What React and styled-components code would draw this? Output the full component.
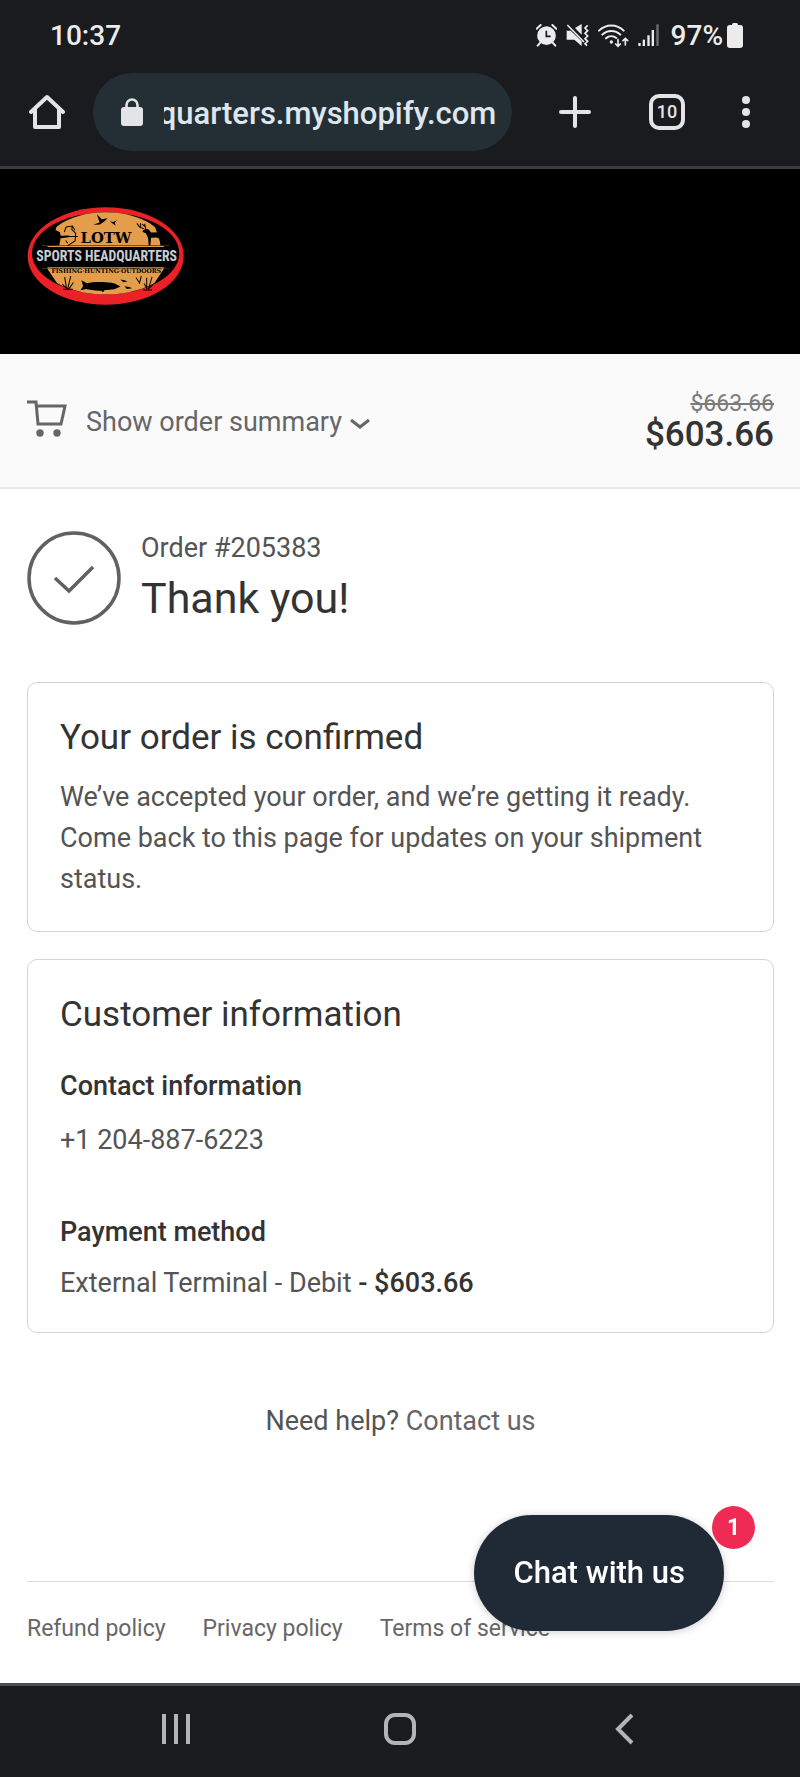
import { useEffect, useRef } from "react";
import styled, { createGlobalStyle } from "styled-components";

const GlobalStyle = createGlobalStyle`
  * {
    box-sizing: border-box;
  }
  body {
    margin: 0;
    background-color: #fff;
    font-family: Roboto, "Liberation Sans", sans-serif;
    font-size: 27px;
    line-height: 41px;
    color: #545454;
  }
  h1, h2, h3, p {
    margin: 0;
  }
  a {
    color: #666668;
    text-decoration: none;
  }
  button {
    padding: 0;
    border: 0;
    background: none;
    font: inherit;
    cursor: pointer;
  }
  svg {
    display: block;
    flex-shrink: 0;
  }
`;

const Screen = styled.div`
  display: flex;
  flex-direction: column;
  min-height: 100vh;
`;

/* phone + browser bars */
const Chrome = styled.div`
  background-color: #191b1e;
  border-bottom: 3px solid #3b3c3e;
  color: #ececec;
`;

const StatusBar = styled.div`
  display: flex;
  align-items: center;
  justify-content: space-between;
  height: 73px;
  padding: 0 57px 2px 50px;
  font-size: 28px;
  font-weight: 500;
`;

const StatusIcons = styled.div`
  display: flex;
  align-items: center;
  gap: 9px;
`;

const Battery = styled.div`
  display: flex;
  align-items: center;
  gap: 4px;
  padding-left: 3px;
`;

const Toolbar = styled.div`
  display: flex;
  align-items: center;
  gap: 28px;
  padding: 0 49px 15px 29px;
  color: #e2e4e8;
`;

const AddressBar = styled.label`
  display: flex;
  flex: 1;
  align-items: center;
  gap: 21px;
  min-width: 0;
  height: 78px;
  padding: 0 16px 0 28px;
  border-radius: 39px;
  background-color: #232f35;
`;

const Url = styled.input`
  flex: 1;
  min-width: 0;
  padding: 2px 0 0;
  border: 0;
  outline: 0;
  background: none;
  color: #dfe6ee;
  font-family: inherit;
  font-size: 31px;
  font-weight: 500;
`;

const ToolbarActions = styled.div`
  display: flex;
  align-items: center;
  gap: 56px;
  padding-left: 17px;
`;

const TabCount = styled.button`
  width: 36px;
  height: 36px;
  border: 4px solid #e2e4e8;
  border-radius: 10px;
  color: #e2e4e8;
  font-size: 18px;
  font-weight: 500;
  line-height: 28px;
`;

const IconButton = styled.button`
  color: inherit;
`;

/* shop */
const ShopHeader = styled.header`
  padding: 38px 27px 49px;
  background-color: #000;
`;

const SummaryBar = styled.div`
  display: flex;
  align-items: center;
  justify-content: space-between;
  padding: 38px 26px 34px 27px;
  border-bottom: 2px solid #e8e8e8;
  background-color: #fafafa;
`;

const SummaryToggle = styled.button`
  display: flex;
  align-items: center;
  color: #666668;
`;

const SummaryLabel = styled.span`
  padding: 0 8px 0 19px;
`;

const Prices = styled.div`
  display: flex;
  flex-direction: column;
  text-align: right;
`;

const OldPrice = styled.del`
  color: #7c7c7c;
  font-size: 23px;
  line-height: 24px;
`;

const Price = styled.strong`
  color: #333;
  font-size: 35px;
  font-weight: 500;
  line-height: 37px;
`;

const Main = styled.main`
  flex: 1;
  padding: 39px 26px 60px 27px;
`;

const OrderHeader = styled.div`
  display: flex;
  align-items: center;
  gap: 20px;
  margin-bottom: 55px;
`;

const Title = styled.h1`
  color: #333;
  font-size: 43px;
  font-weight: 400;
  line-height: 58px;
`;

const Card = styled.section`
  margin-bottom: 27px;
  padding: 32px 32px ${(props) => props.$bottom};
  border: 1px solid #d4d4d4;
  border-radius: 10px;
`;

const CardTitle = styled.h2`
  margin-bottom: ${(props) => props.$space};
  color: #333;
  font-size: 35px;
  font-weight: 400;
  line-height: 46px;
`;

const Label = styled.h3`
  margin-bottom: ${(props) => props.$space};
  color: #333;
  font-size: 27px;
  font-weight: 500;
`;

const Phone = styled.p`
  margin-bottom: 51px;
`;

const Amount = styled.strong`
  color: #333;
  font-weight: 500;
`;

const Help = styled.p`
  padding-top: 41px;
  text-align: center;
`;

const Footer = styled.footer`
  margin: 0 26px 0 27px;
  padding: 30px 0 37px;
  border-top: 1px solid #dcdcdc;
`;

const PolicyLinks = styled.nav`
  display: flex;
  gap: 37px;
  font-size: 23px;
  line-height: 34px;
`;

const NavBar = styled.nav`
  display: flex;
  align-items: center;
  justify-content: space-between;
  height: 94px;
  padding: 0 160px 5px;
  border-top: 3px solid #4a4b4d;
  background-color: #191b1f;
  color: #b4b4b6;
`;

const NavButton = styled.button`
  display: flex;
  justify-content: center;
  width: 32px;
  color: inherit;
`;

/* floats over the page */
const ChatButton = styled.button`
  position: fixed;
  right: 76px;
  bottom: 146px;
  height: 116px;
  padding: 0 39px 2px;
  border-radius: 58px;
  background-color: #202a36;
  box-shadow: 0 1px 8px rgba(0, 0, 0, 0.2);
  color: #fff;
  font-size: 31px;
  font-weight: 500;
`;

const ChatBadge = styled.span`
  position: absolute;
  top: -9px;
  right: -31px;
  width: 43px;
  height: 43px;
  border-radius: 50%;
  background-color: #ef2b55;
  font-size: 23px;
  font-weight: 700;
  line-height: 43px;
`;

const AlarmIcon = () => (
  <svg width="21" height="23" viewBox="405 72 63 69" fill="none" stroke="currentColor">
    <circle cx="436.500" cy="107" r="28" fill="currentColor" stroke="none" />
    <path d="M407 86l12-11M466 86l-12-11M417 129l-7 8M456 129l7 8" strokeWidth="6" strokeLinecap="round" />
    <path d="M436 92v17h13" stroke="#191b1e" strokeWidth="5" />
  </svg>
);

const MuteIcon = () => (
  <svg width="23" height="23" viewBox="503 72 69 69" fill="currentColor">
    <path d="M505 92h12l33 32v14l-22-19h-23zM530 84l20-12v32z" />
    <path d="M507 75l50 51" stroke="currentColor" strokeWidth="5" />
    <path d="M568 76l-8 8 8 8-8 8 8 8-8 8 8 8-8 7 6 6" fill="none" stroke="currentColor" strokeWidth="5" />
  </svg>
);

const WifiIcon = () => (
  <svg width="31" height="24" viewBox="600 70 93 72" fill="none" stroke="currentColor" strokeWidth="6" strokeLinecap="round">
    <path d="M603 90c21-21 53-21 74 0M613 102c15-15 39-15 54 0M624 113c9-8 22-8 31-1" />
    <circle cx="640" cy="124" r="5" fill="currentColor" stroke="none" />
    <path d="M660 117v19M653 130l7 7 7-7M682 133v-19M675 120l7-7 7 7" strokeWidth="5" />
  </svg>
);

const SignalIcon = () => (
  <svg width="21" height="23" viewBox="713 72 63 69" fill="currentColor">
    <rect x="714" y="129" width="7" height="9" />
    <rect x="727" y="119" width="7" height="19" />
    <rect x="741" y="106" width="7" height="32" />
    <rect x="754" y="90" width="7" height="48" />
    <rect x="768" y="73" width="7" height="65" opacity="0.4" />
  </svg>
);

const BatteryIcon = () => (
  <svg width="16" height="25" viewBox="0 0 16 25" fill="currentColor">
    <path d="M5 2V1.500Q5 0 6.500 0h3Q11 0 11 1.500V2h2.500Q16 2 16 5v17q0 3-3 3H3q-3 0-3-3V5q0-3 2.500-3z" />
  </svg>
);

const HomeIcon = () => (
  <svg width="36" height="36" viewBox="0 0 36 36" fill="none" stroke="currentColor" strokeWidth="4">
    <path d="M2 18L18 3l16 15" strokeLinecap="round" strokeLinejoin="round" />
    <path d="M6 15v18h24V15" strokeLinejoin="round" />
  </svg>
);

const LockIcon = () => (
  <svg width="22" height="28" viewBox="0 0 22 28">
    <path d="M5.500 11V7a5.500 5.500 0 0 1 11 0v4" fill="none" stroke="currentColor" strokeWidth="2.600" />
    <rect y="9" width="22" height="19" rx="3" fill="currentColor" />
  </svg>
);

const PlusIcon = () => (
  <svg width="36" height="36" viewBox="0 0 36 36" stroke="currentColor" strokeWidth="4" strokeLinecap="round">
    <path d="M18 4v28M4 18h28" />
  </svg>
);

const DotsIcon = () => (
  <svg width="10" height="36" viewBox="0 0 10 36" fill="currentColor">
    <circle cx="5" cy="6" r="4" />
    <circle cx="5" cy="18" r="4" />
    <circle cx="5" cy="30" r="4" />
  </svg>
);

const CartIcon = () => (
  <svg width="40" height="46" viewBox="0 0 40 46" fill="none" stroke="currentColor" strokeWidth="3">
    <path d="M0 2h9l2 22h23l4-18H10" />
    <circle cx="13" cy="33" r="3.700" fill="currentColor" stroke="none" />
    <circle cx="30" cy="33" r="3.700" fill="currentColor" stroke="none" />
  </svg>
);

const ChevronIcon = () => (
  <svg width="20" height="12" viewBox="0 0 20 12" fill="none" stroke="currentColor" strokeWidth="3">
    <path d="M1 3l9 7 9-7" />
  </svg>
);

const CheckIcon = () => (
  <svg width="94" height="94" viewBox="0 0 94 94" fill="none" stroke="#5f6164">
    <circle cx="47" cy="47" r="45" strokeWidth="3.500" />
    <path d="M28 47l14 13 24-24" strokeWidth="3.500" />
  </svg>
);

const Logo = () => (
  <svg width="157" height="98" viewBox="36 38 467 290" role="img" aria-label="LOTW Sports Headquarters">
    <ellipse cx="270" cy="183" rx="232" ry="145" fill="#ec2127" />
    <ellipse cx="270" cy="175" rx="219" ry="122" fill="#000" />
    <path d="M80 152C104 92 178 53 270 53s166 39 190 99zM80 220h380c-24 44-98 77-190 77S104 264 80 220z" fill="#e39d4b" />
    <path d="M97 155h346M97 218h346" stroke="#e39d4b" strokeWidth="3" />
    {/* dark corners inside the ring */}
    <path d="M80 152c7-22 22-42 44-58l-15 58zM460 152c-7-22-22-42-44-58l20 58zM80 220c8 18 24 34 48 48l-32-48zM460 220c-8 18-24 34-48 48l32-48z" />
    {/* geese */}
    <path d="M233 90l19-7-8-24 14 15 18-3-12 11-11 7zM282 80l10 2 12-5-7 7 3 9-9-7z" />
    {/* archer */}
    <path d="M101 152l9-22 2-15 9-9 13 6 2 11 24-1v5l-24 3-4 22z" />
    <path d="M152 97l19-3-2 10 12 12-2 22-22 14M171 94l8 13M152 97l-5 15M156 125h31M157 145l-6-8" fill="none" stroke="#000" strokeWidth="3" />
    {/* deer */}
    <path d="M380 108l9-7 10 4 6 8 28-1 7 7-1 33h-6l-3-20-8-4-17 1-2 23h-5l-2-23-6-13-10-5z" />
    <path d="M384 102l-13-5-8-11M374 98v-13M389 102l-3-15M387 96l-8-8" fill="none" stroke="#000" strokeWidth="3" />
    {/* fish */}
    <path d="M198 255l16 9c20-5 60-5 83 1l17 9-18 8-30 3-4 6-5-5c-20 1-34-3-45-5l-17 4 8-12zM313 253l13 2 9 4-12 2zM326 273l14 2 9 4-16 2z" />
    {/* reeds */}
    <path d="M148 246l6 35M166 243l-9 38M141 267l13 12M174 262l-13 18M144 282h28M360 247l10 15M376 243l-6 23M392 248v34M408 245l-11 37M384 265l10 16M410 269l-13 12M382 284h26" fill="none" stroke="#000" strokeWidth="3" />
    <text x="271" y="144" textAnchor="middle" fontFamily="'DejaVu Serif', serif" fontSize="44" fontWeight="700">LOTW</text>
    <text x="273" y="199" textAnchor="middle" fontFamily="'Liberation Sans Narrow', 'Roboto Condensed', Roboto, sans-serif" fontSize="41" fontWeight="700" fill="#c9ced6">SPORTS HEADQUARTERS</text>
    <text x="272" y="235" textAnchor="middle" fontFamily="'DejaVu Serif', serif" fontSize="18" fontWeight="700">FISHING·HUNTING·OUTDOORS</text>
  </svg>
);

const RecentsIcon = () => (
  <svg width="30" height="32" viewBox="0 0 30 32" stroke="currentColor" strokeWidth="4">
    <path d="M3 1v30M15 1v30M27 1v30" />
  </svg>
);

const HomeKeyIcon = () => (
  <svg width="32" height="32" viewBox="0 0 32 32" fill="none" stroke="currentColor" strokeWidth="4">
    <rect x="2" y="2" width="28" height="28" rx="9" />
  </svg>
);

const BackIcon = () => (
  <svg width="19" height="32" viewBox="0 0 19 32" fill="none" stroke="currentColor" strokeWidth="4">
    <path d="M17 2L3 16l14 14" />
  </svg>
);

function BrowserBar() {
  const url = useRef(null);

  // keep the end of the domain in view, the start is cut off
  useEffect(() => {
    url.current.scrollLeft = url.current.scrollWidth;
  }, []);

  return (
    <Chrome>
      <StatusBar>
        <span>10:37</span>
        <StatusIcons>
          <AlarmIcon />
          <MuteIcon />
          <WifiIcon />
          <SignalIcon />
          <Battery>
            97%
            <BatteryIcon />
          </Battery>
        </StatusIcons>
      </StatusBar>
      <Toolbar>
        <IconButton aria-label="Home"><HomeIcon /></IconButton>
        <AddressBar>
          <LockIcon />
          <Url ref={url} aria-label="Address" defaultValue="lotwsportsheadquarters.myshopify.com" />
        </AddressBar>
        <ToolbarActions>
          <IconButton aria-label="New tab"><PlusIcon /></IconButton>
          <TabCount>10</TabCount>
          <IconButton aria-label="Menu"><DotsIcon /></IconButton>
        </ToolbarActions>
      </Toolbar>
    </Chrome>
  );
}

function App() {
  return (
    <Screen>
      <GlobalStyle />
      <BrowserBar />

      <ShopHeader>
        <Logo />
      </ShopHeader>

      <SummaryBar>
        <SummaryToggle>
          <CartIcon />
          <SummaryLabel>Show order summary</SummaryLabel>
          <ChevronIcon />
        </SummaryToggle>
        <Prices>
          <OldPrice>$663.66</OldPrice>
          <Price>$603.66</Price>
        </Prices>
      </SummaryBar>

      <Main>
        <OrderHeader>
          <CheckIcon />
          <div>
            <p>Order #205383</p>
            <Title>Thank you!</Title>
          </div>
        </OrderHeader>

        <Card $bottom="31px">
          <CardTitle $space="16px">Your order is confirmed</CardTitle>
          <p>
            We’ve accepted your order, and we’re getting it ready. Come back to
            this page for updates on your shipment status.
          </p>
        </Card>

        <Card $bottom="28px">
          <CardTitle $space="28px">Customer information</CardTitle>
          <Label $space="13px">Contact information</Label>
          <Phone>+1 204-887-6223</Phone>
          <Label $space="10px">Payment method</Label>
          <p>
            External Terminal - Debit <Amount>- $603.66</Amount>
          </p>
        </Card>

        <Help>
          Need help? <a href="#contact">Contact us</a>
        </Help>
      </Main>

      <Footer>
        <PolicyLinks>
          <a href="#refund">Refund policy</a>
          <a href="#privacy">Privacy policy</a>
          <a href="#terms">Terms of service</a>
        </PolicyLinks>
      </Footer>

      <NavBar>
        <NavButton aria-label="Recent apps"><RecentsIcon /></NavButton>
        <NavButton aria-label="Home screen"><HomeKeyIcon /></NavButton>
        <NavButton aria-label="Back"><BackIcon /></NavButton>
      </NavBar>

      <ChatButton>
        Chat with us
        <ChatBadge>1</ChatBadge>
      </ChatButton>
    </Screen>
  );
}

export default App;
